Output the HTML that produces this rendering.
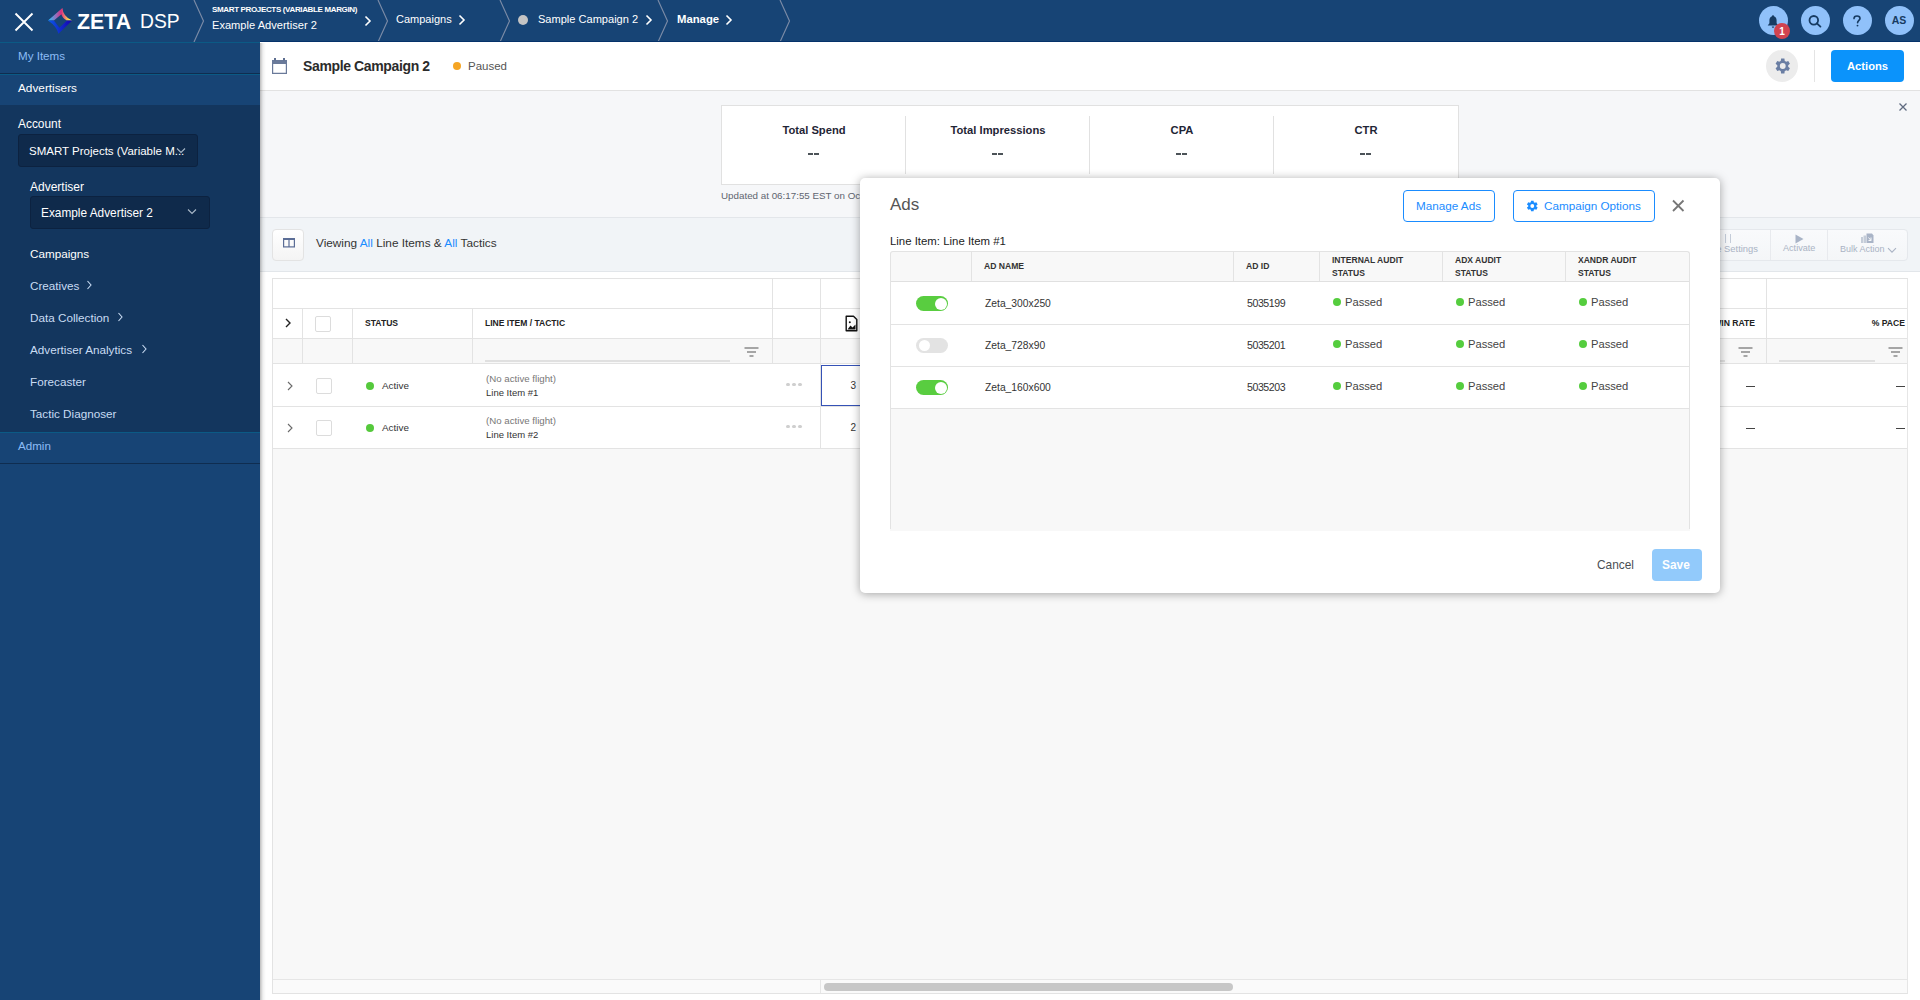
<!DOCTYPE html>
<html><head><meta charset="utf-8">
<style>
*{box-sizing:border-box;margin:0;padding:0}
html,body{width:1920px;height:1000px;overflow:hidden;background:#fff;font-family:"Liberation Sans",sans-serif;position:relative}
.a{position:absolute}
.t{position:absolute;white-space:nowrap;line-height:1}
/* header */
#hdr{left:0;top:0;width:1920px;height:42px;background:#174475}
.sep{position:absolute;top:0;width:12px;height:42px}
.hc{position:absolute;width:29px;height:29px;border-radius:50%;background:#90c1fa;top:6.4px}
/* sidebar */
#side{left:0;top:43px;width:260px;height:957px;background:#174475}
.sl{color:#c9dcf3;font-size:11.7px}
</style></head><body>

<!-- HEADER -->
<div id="hdr" class="a">
  <svg class="a" style="left:14px;top:12px" width="20" height="20" viewBox="0 0 20 20"><path d="M1.5 1.5L18.5 18.5M18.5 1.5L1.5 18.5" stroke="#fff" stroke-width="1.9" fill="none"/></svg>
  <svg class="a" style="left:44px;top:4px" width="32" height="32" viewBox="0 0 32 32">
    <defs>
      <linearGradient id="g1" x1="4" y1="0" x2="28" y2="0" gradientUnits="userSpaceOnUse"><stop offset="0" stop-color="#22c4ff"/><stop offset="0.35" stop-color="#9a6ab8"/><stop offset="0.55" stop-color="#d82e7e"/><stop offset="0.7" stop-color="#f0806e"/><stop offset="0.9" stop-color="#fff04a"/><stop offset="1" stop-color="#ffff40"/></linearGradient>
      <linearGradient id="g2" x1="4" y1="0" x2="28" y2="0" gradientUnits="userSpaceOnUse"><stop offset="0" stop-color="#0a5ae8"/><stop offset="1" stop-color="#1600b0"/></linearGradient>
    </defs>
    <path d="M4 16.6 L18.4 4 Q19 12.5 28.2 16.6 L23 16.6 Q18.2 14 17.4 10.2 L9.9 16.6 Z" fill="url(#g1)"/>
    <path d="M4 16.6 L9.9 16.6 L15.4 23.7 L23 16.6 L28.2 16.6 L14.4 29.8 Q12.8 22.5 4 16.6 Z" fill="url(#g2)"/>
  </svg>
  <div class="t" style="left:77px;top:11.7px;font-size:21.3px;font-weight:700;color:#fff;letter-spacing:0px">ZETA</div>
  <div class="t" style="left:140px;top:12px;font-size:19.3px;color:#fff;letter-spacing:0px">DSP</div>

  <svg class="sep" style="left:193px" viewBox="0 0 12 42"><path d="M1 0 L10.5 21 L1 42" stroke="#7b8ba6" stroke-width="1.15" fill="none"/></svg>
  <div class="t" style="left:212px;top:6px;font-size:8px;font-weight:700;color:#fff;letter-spacing:-0.35px">SMART PROJECTS (VARIABLE MARGIN)</div>
  <div class="t" style="left:212px;top:19.5px;font-size:11.1px;color:#fff">Example Advertiser 2</div>
  <svg class="a" style="left:363px;top:15px" width="10" height="12" viewBox="0 0 10 12"><path d="M2.5 1.5L7 6L2.5 10.5" stroke="#fff" stroke-width="1.6" fill="none"/></svg>

  <svg class="sep" style="left:377px" viewBox="0 0 12 42"><path d="M1 0 L10.5 21 L1 42" stroke="#7b8ba6" stroke-width="1.15" fill="none"/></svg>
  <div class="t" style="left:396px;top:13.5px;font-size:11px;color:#fff">Campaigns</div>
  <svg class="a" style="left:457px;top:14px" width="10" height="12" viewBox="0 0 10 12"><path d="M2.5 1.5L7 6L2.5 10.5" stroke="#fff" stroke-width="1.6" fill="none"/></svg>

  <svg class="sep" style="left:499px" viewBox="0 0 12 42"><path d="M1 0 L10.5 21 L1 42" stroke="#7b8ba6" stroke-width="1.15" fill="none"/></svg>
  <div class="a" style="left:518px;top:15px;width:10px;height:10px;border-radius:50%;background:#c4c4c4"></div>
  <div class="t" style="left:538px;top:13.5px;font-size:11.05px;color:#fff">Sample Campaign 2</div>
  <svg class="a" style="left:644px;top:14px" width="10" height="12" viewBox="0 0 10 12"><path d="M2.5 1.5L7 6L2.5 10.5" stroke="#fff" stroke-width="1.6" fill="none"/></svg>

  <svg class="sep" style="left:657px" viewBox="0 0 12 42"><path d="M1 0 L10.5 21 L1 42" stroke="#7b8ba6" stroke-width="1.15" fill="none"/></svg>
  <div class="t" style="left:677px;top:13.5px;font-size:11.3px;font-weight:700;color:#fff">Manage</div>
  <svg class="a" style="left:724px;top:14px" width="10" height="12" viewBox="0 0 10 12"><path d="M2.5 1.5L7 6L2.5 10.5" stroke="#fff" stroke-width="1.6" fill="none"/></svg>

  <svg class="sep" style="left:779px" viewBox="0 0 12 42"><path d="M1 0 L10.5 21 L1 42" stroke="#7b8ba6" stroke-width="1.15" fill="none"/></svg>

  <div class="hc" style="left:1758.5px"></div>
  <div class="hc" style="left:1800.5px"></div>
  <div class="hc" style="left:1842.5px"></div>
  <div class="hc" style="left:1884.5px"></div>
  <svg class="a" style="left:1766px;top:14px" width="14" height="15" viewBox="0 0 14 15"><path d="M7 1.2C7.6 1.2 8 1.7 8 2.2 10 2.8 10.6 4.6 10.6 6.6V9.2L12.3 11.6H1.7L3.4 9.2V6.6C3.4 4.6 4 2.8 6 2.2 6 1.7 6.4 1.2 7 1.2Z" fill="#173b62"/><path d="M5.8 12.4H8.2C8.2 13.2 7.7 13.7 7 13.7S5.8 13.2 5.8 12.4Z" fill="#173b62"/></svg>
  <div class="a" style="left:1774px;top:23px;width:16px;height:16px;border-radius:50%;background:#d1434f"></div>
  <div class="t" style="left:1774px;width:16px;text-align:center;top:26.5px;font-size:10px;font-weight:700;color:#fff">1</div>
  <svg class="a" style="left:1807px;top:13px" width="16" height="16" viewBox="0 0 16 16"><circle cx="6.8" cy="7.3" r="4.3" fill="none" stroke="#173b62" stroke-width="1.8"/><path d="M9.9 10.4L13.4 13.6" stroke="#173b62" stroke-width="1.9" stroke-linecap="round"/></svg>
  <svg class="a" style="left:1851px;top:14px" width="12" height="14" viewBox="0 0 12 14"><path d="M3 4.6C3 2.9 4.3 2 6 2S9 3 9 4.5C9 6.3 6.6 6.6 6.6 8.8" fill="none" stroke="#173b62" stroke-width="1.6" stroke-linecap="round"/><circle cx="6.5" cy="11.6" r="0.95" fill="#173b62"/></svg>
  <div class="t" style="left:1884.5px;width:29px;text-align:center;top:15px;font-size:10.5px;font-weight:700;color:#173b62">AS</div>
</div>

<div class="a" style="left:0;top:42px;width:260px;height:1px;background:#0b5a85"></div>
<div class="a" style="left:260px;top:42px;width:1660px;height:1px;background:#fff"></div>
<div class="a" style="left:260px;top:41px;width:1660px;height:1px;background:#05326a"></div>
<!-- SIDEBAR -->
<div id="side" class="a">
  <div class="a" style="left:0;top:0;width:260px;height:31px;background:#174475"></div>
  <div class="t" style="left:18px;top:7px;font-size:11.6px;color:#8cbcf6">My Items</div>
  <div class="a" style="left:0;top:30px;width:260px;height:1px;background:#0f2d50"></div>
  <div class="a" style="left:0;top:31px;width:260px;height:1px;background:#0b5a85"></div>
  <div class="t" style="left:18px;top:40px;font-size:11.8px;color:#fff">Advertisers</div>
  <div class="a" style="left:0;top:62px;width:260px;height:327px;background:#13365e"></div>
  <div class="t" style="left:18px;top:75.5px;font-size:11.9px;color:#fff">Account</div>
  <div class="a" style="left:18px;top:90.5px;width:180px;height:33px;background:#0f2a4b;border:1px solid #0c2240;border-radius:3px"></div>
  <div class="t" style="left:29px;top:103px;font-size:11.5px;color:#fff">SMART Projects (Variable M...</div>
  <svg class="a" style="left:175px;top:104px" width="12" height="8" viewBox="0 0 12 8"><path d="M2 1.5L6 5.5L10 1.5" stroke="#aab8c8" stroke-width="1.1" fill="none"/></svg>
  <div class="t" style="left:30px;top:137.5px;font-size:12px;color:#fff">Advertiser</div>
  <div class="a" style="left:30px;top:152.5px;width:180px;height:33px;background:#0f2a4b;border:1px solid #0c2240;border-radius:3px"></div>
  <div class="t" style="left:41px;top:165px;font-size:11.85px;color:#fff">Example Advertiser 2</div>
  <svg class="a" style="left:186px;top:165px" width="12" height="8" viewBox="0 0 12 8"><path d="M2 1.5L6 5.5L10 1.5" stroke="#aab8c8" stroke-width="1.1" fill="none"/></svg>
  <div class="t" style="left:30px;top:205px;font-size:11.7px;color:#fff">Campaigns</div>
  <div class="t sl" style="left:30px;top:237px">Creatives</div>
  <svg class="a" style="left:85px;top:236px" width="8" height="12" viewBox="0 0 8 12"><path d="M2.5 2L6 6L2.5 10" stroke="#c9dcf3" stroke-width="1.1" fill="none"/></svg>
  <div class="t sl" style="left:30px;top:269px">Data Collection</div>
  <svg class="a" style="left:116px;top:268px" width="8" height="12" viewBox="0 0 8 12"><path d="M2.5 2L6 6L2.5 10" stroke="#c9dcf3" stroke-width="1.1" fill="none"/></svg>
  <div class="t sl" style="left:30px;top:301px">Advertiser Analytics</div>
  <svg class="a" style="left:140px;top:300px" width="8" height="12" viewBox="0 0 8 12"><path d="M2.5 2L6 6L2.5 10" stroke="#c9dcf3" stroke-width="1.1" fill="none"/></svg>
  <div class="t sl" style="left:30px;top:333px">Forecaster</div>
  <div class="t sl" style="left:30px;top:365px">Tactic Diagnoser</div>
  <div class="a" style="left:0;top:389px;width:260px;height:1px;background:#0b5a85"></div>
  <div class="t" style="left:18px;top:397px;font-size:11.6px;color:#8cbcf6">Admin</div>
  <div class="a" style="left:0;top:420px;width:260px;height:1px;background:#0f2d50"></div>
</div>


<!-- MAIN -->
<div id="main" class="a" style="left:260px;top:43px;width:1660px;height:957px;background:#fff">
  <!-- campaign header -->
  <div class="a" style="left:0;top:0;width:1660px;height:48px;background:#fff;border-bottom:1px solid #e2e2e2"></div>
  <svg class="a" style="left:11px;top:14px" width="17" height="18" viewBox="0 0 17 18"><path d="M1.6 3.6H15.4V16.4H1.6Z" stroke="#6a7a9a" stroke-width="1.2" fill="none"/><path d="M1 3H16V7H1Z" fill="#6a7a9a"/><path d="M3 1H5V3.5H3ZM12 1H14V3.5H12Z" fill="#5d6e90"/></svg>
  <div class="t" style="left:43px;top:16px;font-size:14px;font-weight:700;color:#2b2b2b;letter-spacing:-0.37px">Sample Campaign 2</div>
  <div class="a" style="left:193px;top:19px;width:8px;height:8px;border-radius:50%;background:#f5a524"></div>
  <div class="t" style="left:208px;top:17.5px;font-size:11.5px;color:#555">Paused</div>
  <div class="a" style="left:1506px;top:7px;width:32px;height:32px;border-radius:50%;background:#ececec"></div>
  <svg class="a" style="left:1512px;top:13px" width="20" height="20" viewBox="0 0 24 24"><path fill="#6a7ea3" d="M19.4 13a7.5 7.5 0 0 0 0-2l2.1-1.6-2-3.5-2.5 1a7.3 7.3 0 0 0-1.7-1L14.9 3h-4l-.4 2.9a7.3 7.3 0 0 0-1.7 1l-2.5-1-2 3.5L6.4 11a7.5 7.5 0 0 0 0 2l-2.1 1.6 2 3.5 2.5-1a7.3 7.3 0 0 0 1.7 1l.4 2.9h4l.4-2.9a7.3 7.3 0 0 0 1.7-1l2.5 1 2-3.5zM12.9 15.5a3.5 3.5 0 1 1 0-7 3.5 3.5 0 0 1 0 7z"/></svg>
  <div class="a" style="left:1554px;top:7px;width:1px;height:32px;background:#e4e4e4"></div>
  <div class="a" style="left:1571px;top:7px;width:73px;height:32px;border-radius:4px;background:#0b93fb"></div>
  <div class="t" style="left:1587px;top:18px;font-size:11.2px;font-weight:700;color:#fff">Actions</div>

  <!-- stats -->
  <div class="a" style="left:0;top:48px;width:1660px;height:127px;background:#f6f7f9;border-bottom:1px solid #e3e6ea"></div>
  <svg class="a" style="left:1638px;top:59px" width="10" height="10" viewBox="0 0 10 10"><path d="M1.5 1.5L8.5 8.5M8.5 1.5L1.5 8.5" stroke="#5f6b80" stroke-width="1.3"/></svg>
  <div class="a" style="left:461px;top:62px;width:738px;height:80px;background:#fff;border:1px solid #e1e1e1"></div>
  <div class="a" style="left:645px;top:73px;width:1px;height:58px;background:#e1e1e1"></div>
  <div class="a" style="left:829px;top:73px;width:1px;height:58px;background:#e1e1e1"></div>
  <div class="a" style="left:1013px;top:73px;width:1px;height:58px;background:#e1e1e1"></div>
  <div class="t" style="left:462px;width:184px;text-align:center;top:81.5px;font-size:11.2px;font-weight:700;color:#1f2535">Total Spend</div>
  <div class="t" style="left:646px;width:184px;text-align:center;top:81.5px;font-size:11.2px;font-weight:700;color:#1f2535">Total Impressions</div>
  <div class="t" style="left:830px;width:184px;text-align:center;top:81.5px;font-size:11.2px;font-weight:700;color:#1f2535">CPA</div>
  <div class="t" style="left:1014px;width:184px;text-align:center;top:81.5px;font-size:11.2px;font-weight:700;color:#1f2535">CTR</div>
  <div class="t" style="left:461px;top:148px;font-size:9.8px;color:#5f6570">Updated at 06:17:55 EST on Oct</div>

  <!-- toolbar -->
  <div class="a" style="left:0;top:175px;width:1660px;height:54px;background:#f1f4f7;border-bottom:1px solid #e2e6ea"></div>
  <div class="a" style="left:12px;top:186px;width:32px;height:32px;border-radius:4px;background:linear-gradient(#fff,#f4f4f4);border:1px solid #e3e3e3"></div>
  <svg class="a" style="left:22px;top:194px" width="13" height="11" viewBox="0 0 13 11"><rect x="1.6" y="1.6" width="10.8" height="8.3" fill="none" stroke="#5b6d96" stroke-width="1.2"/><rect x="1" y="1" width="12" height="2" fill="#5b6d96"/><path d="M7 1.5V10" stroke="#5b6d96" stroke-width="1.2"/></svg>
  <div class="t" style="left:56px;top:194.5px;font-size:11.8px;color:#333">Viewing <span style="color:#1a8cff">All</span> Line Items &amp; <span style="color:#1a8cff">All</span> Tactics</div>
</div>

<div class="a" style="left:808.3px;top:152.6px;width:4.6px;height:2px;background:#4c5358"></div><div class="a" style="left:814.1px;top:152.6px;width:4.6px;height:2px;background:#4c5358"></div>
<div class="a" style="left:992.3px;top:152.6px;width:4.6px;height:2px;background:#4c5358"></div><div class="a" style="left:998.1px;top:152.6px;width:4.6px;height:2px;background:#4c5358"></div>
<div class="a" style="left:1176.3px;top:152.6px;width:4.6px;height:2px;background:#4c5358"></div><div class="a" style="left:1182.1px;top:152.6px;width:4.6px;height:2px;background:#4c5358"></div>
<div class="a" style="left:1360.3px;top:152.6px;width:4.6px;height:2px;background:#4c5358"></div><div class="a" style="left:1366.1px;top:152.6px;width:4.6px;height:2px;background:#4c5358"></div>
<!-- shadow of sidebar -->
<div class="a" style="left:260px;top:43px;width:6px;height:957px;background:linear-gradient(90deg,rgba(0,0,0,0.26),rgba(0,0,0,0.06) 50%,rgba(0,0,0,0))"></div>

<!-- TABLE -->
<div class="a" style="left:272px;top:278px;width:1636px;height:716px;background:#f8f8f8;border:1px solid #e3e3e3;border-right:1px solid #e6e6e6"></div>
<!-- header rows white -->
<div class="a" style="left:273px;top:279px;width:1634px;height:59px;background:#fff"></div>
<div class="a" style="left:273px;top:308px;width:1634px;height:1px;background:#e3e3e3"></div>
<div class="a" style="left:273px;top:338px;width:1634px;height:1px;background:#e3e3e3"></div>
<div class="a" style="left:273px;top:339px;width:1634px;height:24px;background:#f8f8f8"></div>
<div class="a" style="left:273px;top:363px;width:1634px;height:1px;background:#e3e3e3"></div>
<div class="a" style="left:273px;top:364px;width:1634px;height:84px;background:#fff"></div>
<div class="a" style="left:273px;top:406px;width:1634px;height:1px;background:#e3e3e3"></div>
<div class="a" style="left:273px;top:448px;width:1634px;height:1px;background:#e3e3e3"></div>
<!-- col dividers -->
<div class="a" style="left:302px;top:308px;width:1px;height:56px;background:#e3e3e3"></div>
<div class="a" style="left:352px;top:308px;width:1px;height:56px;background:#e3e3e3"></div>
<div class="a" style="left:472px;top:308px;width:1px;height:56px;background:#e3e3e3"></div>
<div class="a" style="left:772px;top:279px;width:1px;height:85px;background:#e3e3e3"></div>
<div class="a" style="left:820px;top:279px;width:1px;height:169px;background:#e3e3e3"></div>
<div class="a" style="left:1766px;top:279px;width:1px;height:85px;background:#e3e3e3"></div>
<!-- scrollbar -->
<div class="a" style="left:273px;top:979px;width:1634px;height:1px;background:#e6e6e6"></div>
<div class="a" style="left:273px;top:980px;width:1634px;height:13px;background:#fafafa"></div>
<div class="a" style="left:820px;top:980px;width:1px;height:13px;background:#e6e6e6"></div>
<div class="a" style="left:824px;top:983px;width:409px;height:8px;border-radius:4px;background:#c7c7c7"></div>

<!-- header content -->
<svg class="a" style="left:284px;top:317px" width="8" height="12" viewBox="0 0 8 12"><path d="M2 2L6 6L2 10" stroke="#222" stroke-width="1.4" fill="none"/></svg>
<div class="a" style="left:315px;top:316px;width:16px;height:16px;border:1px solid #dcdcdc;border-radius:2px;background:#fff"></div>
<div class="t" style="left:365px;top:318.5px;font-size:8.6px;font-weight:700;color:#222">STATUS</div>
<div class="t" style="left:485px;top:318.5px;font-size:8.55px;font-weight:700;color:#222">LINE ITEM / TACTIC</div>
<svg class="a" style="left:845px;top:315px" width="13" height="17" viewBox="0 0 13 17"><path d="M1.2 1.2H8.5L11.8 4.5V15.8H1.2Z" fill="none" stroke="#111" stroke-width="1.4" stroke-linejoin="round"/><path d="M2.5 14.5L5.5 10.5L7.5 12.5L10.5 9.5V14.5Z" fill="#111"/><circle cx="4.8" cy="7.2" r="1" fill="#111"/></svg>
<div class="t" style="left:1700px;width:55px;text-align:right;top:318.5px;font-size:8.6px;font-weight:700;color:#222">WIN RATE</div>
<div class="t" style="left:1840px;width:65px;text-align:right;top:318.5px;font-size:8.6px;font-weight:700;color:#222">% PACE</div>
<!-- filter row -->
<div class="a" style="left:485px;top:359.5px;width:245px;height:2px;background:#e0e0e0"></div>
<svg class="a" style="left:744px;top:347px" width="15" height="11" viewBox="0 0 15 11"><path d="M0.5 1H14.5M3 5H12M5.5 9H9.5" stroke="#8a8a8a" stroke-width="1.3"/></svg>
<div class="a" style="left:1690px;top:359.5px;width:35px;height:2px;background:#e0e0e0"></div>
<svg class="a" style="left:1738px;top:347px" width="15" height="11" viewBox="0 0 15 11"><path d="M0.5 1H14.5M3 5H12M5.5 9H9.5" stroke="#8a8a8a" stroke-width="1.3"/></svg>
<div class="a" style="left:1779px;top:359.5px;width:96px;height:2px;background:#e0e0e0"></div>
<svg class="a" style="left:1888px;top:347px" width="15" height="11" viewBox="0 0 15 11"><path d="M0.5 1H14.5M3 5H12M5.5 9H9.5" stroke="#8a8a8a" stroke-width="1.3"/></svg>

<!-- rows -->
<svg class="a" style="left:286px;top:380px" width="8" height="12" viewBox="0 0 8 12"><path d="M2 2L6 6L2 10" stroke="#6a6a6a" stroke-width="1.1" fill="none"/></svg>
<div class="a" style="left:316px;top:378px;width:16px;height:16px;border:1px solid #dcdcdc;border-radius:2px;background:#fff"></div>
<div class="a" style="left:366px;top:382px;width:8px;height:8px;border-radius:50%;background:#55c93c"></div>
<div class="t" style="left:382px;top:381px;font-size:9.9px;color:#333">Active</div>
<div class="t" style="left:486px;top:373.5px;font-size:9.7px;color:#777">(No active flight)</div>
<div class="t" style="left:486px;top:387.5px;font-size:9.5px;color:#333">Line Item #1</div>
<div class="a" style="left:786px;top:382.5px;width:3.5px;height:3.5px;border-radius:50%;background:#cfcfcf;box-shadow:6px 0 0 #cfcfcf,12px 0 0 #cfcfcf"></div>
<div class="a" style="left:821px;top:365px;width:45px;height:41px;border:1.5px solid #3552b6"></div>
<div class="t" style="left:829px;width:27px;text-align:right;top:381px;font-size:10px;color:#333">3</div>
<div class="a" style="left:1746px;top:385.5px;width:9px;height:1.2px;background:#444"></div>
<div class="a" style="left:1895.5px;top:385.5px;width:9px;height:1.2px;background:#444"></div>

<svg class="a" style="left:286px;top:422px" width="8" height="12" viewBox="0 0 8 12"><path d="M2 2L6 6L2 10" stroke="#6a6a6a" stroke-width="1.1" fill="none"/></svg>
<div class="a" style="left:316px;top:420px;width:16px;height:16px;border:1px solid #dcdcdc;border-radius:2px;background:#fff"></div>
<div class="a" style="left:366px;top:424px;width:8px;height:8px;border-radius:50%;background:#55c93c"></div>
<div class="t" style="left:382px;top:423px;font-size:9.9px;color:#333">Active</div>
<div class="t" style="left:486px;top:415.5px;font-size:9.7px;color:#777">(No active flight)</div>
<div class="t" style="left:486px;top:429.5px;font-size:9.5px;color:#333">Line Item #2</div>
<div class="a" style="left:786px;top:424.5px;width:3.5px;height:3.5px;border-radius:50%;background:#cfcfcf;box-shadow:6px 0 0 #cfcfcf,12px 0 0 #cfcfcf"></div>
<div class="t" style="left:829px;width:27px;text-align:right;top:423px;font-size:10px;color:#333">2</div>
<div class="a" style="left:1746px;top:427.5px;width:9px;height:1.2px;background:#444"></div>
<div class="a" style="left:1895.5px;top:427.5px;width:9px;height:1.2px;background:#444"></div>

<!-- right toolbar buttons -->
<div class="a" style="left:1640px;top:229px;width:268px;height:31.5px;border:1px solid #e5e8ec;border-radius:4px;background:linear-gradient(#f9fafc,#f4f6f8)"></div>
<div class="a" style="left:1770px;top:230px;width:1px;height:30px;background:#e8eaee"></div>
<div class="a" style="left:1827px;top:230px;width:1px;height:30px;background:#e8eaee"></div>
<div class="a" style="left:1725px;top:234px;width:1.2px;height:9px;background:#c4ccd9"></div>
<div class="a" style="left:1730px;top:234px;width:1.2px;height:9px;background:#c4ccd9"></div>
<div class="t" style="left:1680px;width:78px;text-align:right;top:244px;font-size:9.4px;color:#aab3c4">Save Settings</div>
<svg class="a" style="left:1795px;top:233.5px" width="9" height="10" viewBox="0 0 9 10"><path d="M0.5 0.5L8.5 5L0.5 9.5Z" fill="#a9b4c7"/></svg>
<div class="t" style="left:1783px;top:244px;font-size:9.1px;color:#aab3c4">Activate</div>
<svg class="a" style="left:1860px;top:232px" width="15" height="12" viewBox="0 0 15 12"><path d="M1 5H3V11H1Z M3.5 3.5H6V11H3.5Z" fill="#c5cdd9"/><path d="M6.5 1.5H12L13.5 3.5V11H6.5Z" fill="#a9b4c7"/><path d="M8.5 5.5L11 8.5M11 5.5V8.5H8.5" stroke="#f6f8fa" stroke-width="1" fill="none"/></svg>
<div class="t" style="left:1840px;top:245px;font-size:9.0px;color:#aab3c4">Bulk Action</div>
<svg class="a" style="left:1887px;top:246.5px" width="10" height="7" viewBox="0 0 10 7"><path d="M1 1.2L5 5.2L9 1.2" stroke="#aab3c4" stroke-width="1.1" fill="none"/></svg>

<!-- MODAL -->
<div class="a" style="left:860px;top:178px;width:860px;height:415px;background:#fff;border-radius:5px;box-shadow:0 1px 10px rgba(0,0,0,0.35)"></div>
<div class="t" style="left:890px;top:195.8px;font-size:17px;color:#555">Ads</div>
<div class="a" style="left:1403px;top:190px;width:92px;height:32px;border:1.5px solid #1a8cff;border-radius:4px"></div>
<div class="t" style="left:1416px;top:199.8px;font-size:11.7px;color:#1a8cff">Manage Ads</div>
<div class="a" style="left:1513px;top:190px;width:142px;height:32px;border:1.5px solid #1a8cff;border-radius:4px"></div>
<svg class="a" style="left:1525px;top:199px" width="14" height="14" viewBox="0 0 24 24"><path fill="#1a8cff" d="M19.4 13a7.5 7.5 0 0 0 0-2l2.3-1.7-2.2-3.8-2.7 1.1a7.3 7.3 0 0 0-1.7-1L14.7 2.8h-4.4l-.4 2.8a7.3 7.3 0 0 0-1.7 1L5.5 5.5 3.3 9.3 5.6 11a7.5 7.5 0 0 0 0 2l-2.3 1.7 2.2 3.8 2.7-1.1a7.3 7.3 0 0 0 1.7 1l.4 2.8h4.4l.4-2.8a7.3 7.3 0 0 0 1.7-1l2.7 1.1 2.2-3.8zM12.5 15.3a3.3 3.3 0 1 1 0-6.6 3.3 3.3 0 0 1 0 6.6z"/></svg>
<div class="t" style="left:1544px;top:199.8px;font-size:11.7px;color:#1a8cff">Campaign Options</div>
<svg class="a" style="left:1671px;top:199px" width="14" height="14" viewBox="0 0 14 14"><path d="M2 1.5L12.5 12M12.5 1.5L2 12" stroke="#777" stroke-width="1.8"/></svg>
<div class="t" style="left:890px;top:235.5px;font-size:11.4px;color:#222">Line Item: Line Item #1</div>

<!-- modal table -->
<div class="a" style="left:890px;top:251px;width:800px;height:280px;background:#f8f8f8;border:1px solid #e3e3e3;border-bottom:none;border-radius:3px 3px 0 0"></div>
<div class="a" style="left:890px;top:529px;width:800px;height:2px;background:#f8f8f8"></div>
<div class="a" style="left:891px;top:281px;width:798px;height:1px;background:#e0e0e0"></div>
<div class="a" style="left:891px;top:282px;width:798px;height:126px;background:#fff"></div>
<div class="a" style="left:891px;top:324px;width:798px;height:1px;background:#e3e3e3"></div>
<div class="a" style="left:891px;top:366px;width:798px;height:1px;background:#e3e3e3"></div>
<div class="a" style="left:891px;top:408px;width:798px;height:1px;background:#e3e3e3"></div>
<div class="a" style="left:971px;top:252px;width:1px;height:29px;background:#e3e3e3"></div>
<div class="a" style="left:1233px;top:252px;width:1px;height:29px;background:#e3e3e3"></div>
<div class="a" style="left:1319px;top:252px;width:1px;height:29px;background:#e3e3e3"></div>
<div class="a" style="left:1442px;top:252px;width:1px;height:29px;background:#e3e3e3"></div>
<div class="a" style="left:1565px;top:252px;width:1px;height:29px;background:#e3e3e3"></div>
<div class="t" style="left:984px;top:261.5px;font-size:8.6px;font-weight:700;color:#333">AD NAME</div>
<div class="t" style="left:1246px;top:261.5px;font-size:8.6px;font-weight:700;color:#333">AD ID</div>
<div class="t" style="left:1332px;top:254px;font-size:8.55px;font-weight:700;color:#333;line-height:13px">INTERNAL AUDIT<br>STATUS</div>
<div class="t" style="left:1455px;top:254px;font-size:8.55px;font-weight:700;color:#333;line-height:13px">ADX AUDIT<br>STATUS</div>
<div class="t" style="left:1578px;top:254px;font-size:8.55px;font-weight:700;color:#333;line-height:13px">XANDR AUDIT<br>STATUS</div>
<div class="a" style="left:916px;top:296px;width:32px;height:15px;border-radius:8px;background:#59cd40"></div>
<div class="a" style="left:935px;top:297.5px;width:12px;height:12px;border-radius:50%;background:#fff"></div>
<div class="t" style="left:985px;top:298.5px;font-size:10.3px;color:#333">Zeta_300x250</div>
<div class="t" style="left:1247px;top:298.0px;font-size:10.6px;letter-spacing:-0.45px;color:#333">5035199</div>
<div class="a" style="left:1333px;top:298px;width:8px;height:8px;border-radius:50%;background:#55cd3e"></div>
<div class="t" style="left:1345px;top:296.5px;font-size:11.2px;color:#444">Passed</div>
<div class="a" style="left:1456px;top:298px;width:8px;height:8px;border-radius:50%;background:#55cd3e"></div>
<div class="t" style="left:1468px;top:296.5px;font-size:11.2px;color:#444">Passed</div>
<div class="a" style="left:1579px;top:298px;width:8px;height:8px;border-radius:50%;background:#55cd3e"></div>
<div class="t" style="left:1591px;top:296.5px;font-size:11.2px;color:#444">Passed</div>
<div class="a" style="left:916px;top:338px;width:32px;height:15px;border-radius:8px;background:#e3e3e3"></div>
<div class="a" style="left:919px;top:340.0px;width:11px;height:11px;border-radius:50%;background:#fff"></div>
<div class="t" style="left:985px;top:340.5px;font-size:10.3px;color:#333">Zeta_728x90</div>
<div class="t" style="left:1247px;top:340.0px;font-size:10.6px;letter-spacing:-0.45px;color:#333">5035201</div>
<div class="a" style="left:1333px;top:340px;width:8px;height:8px;border-radius:50%;background:#55cd3e"></div>
<div class="t" style="left:1345px;top:338.5px;font-size:11.2px;color:#444">Passed</div>
<div class="a" style="left:1456px;top:340px;width:8px;height:8px;border-radius:50%;background:#55cd3e"></div>
<div class="t" style="left:1468px;top:338.5px;font-size:11.2px;color:#444">Passed</div>
<div class="a" style="left:1579px;top:340px;width:8px;height:8px;border-radius:50%;background:#55cd3e"></div>
<div class="t" style="left:1591px;top:338.5px;font-size:11.2px;color:#444">Passed</div>
<div class="a" style="left:916px;top:380px;width:32px;height:15px;border-radius:8px;background:#59cd40"></div>
<div class="a" style="left:935px;top:381.5px;width:12px;height:12px;border-radius:50%;background:#fff"></div>
<div class="t" style="left:985px;top:382.5px;font-size:10.3px;color:#333">Zeta_160x600</div>
<div class="t" style="left:1247px;top:382.0px;font-size:10.6px;letter-spacing:-0.45px;color:#333">5035203</div>
<div class="a" style="left:1333px;top:382px;width:8px;height:8px;border-radius:50%;background:#55cd3e"></div>
<div class="t" style="left:1345px;top:380.5px;font-size:11.2px;color:#444">Passed</div>
<div class="a" style="left:1456px;top:382px;width:8px;height:8px;border-radius:50%;background:#55cd3e"></div>
<div class="t" style="left:1468px;top:380.5px;font-size:11.2px;color:#444">Passed</div>
<div class="a" style="left:1579px;top:382px;width:8px;height:8px;border-radius:50%;background:#55cd3e"></div>
<div class="t" style="left:1591px;top:380.5px;font-size:11.2px;color:#444">Passed</div>

<div class="t" style="left:1597px;top:560.4px;font-size:11.9px;color:#4a4f55">Cancel</div>
<div class="a" style="left:1652px;top:549px;width:50px;height:32px;border-radius:4px;background:#92cafb"></div>
<div class="t" style="left:1662px;top:560.4px;font-size:11.9px;font-weight:700;color:#fff">Save</div>

</body></html>
